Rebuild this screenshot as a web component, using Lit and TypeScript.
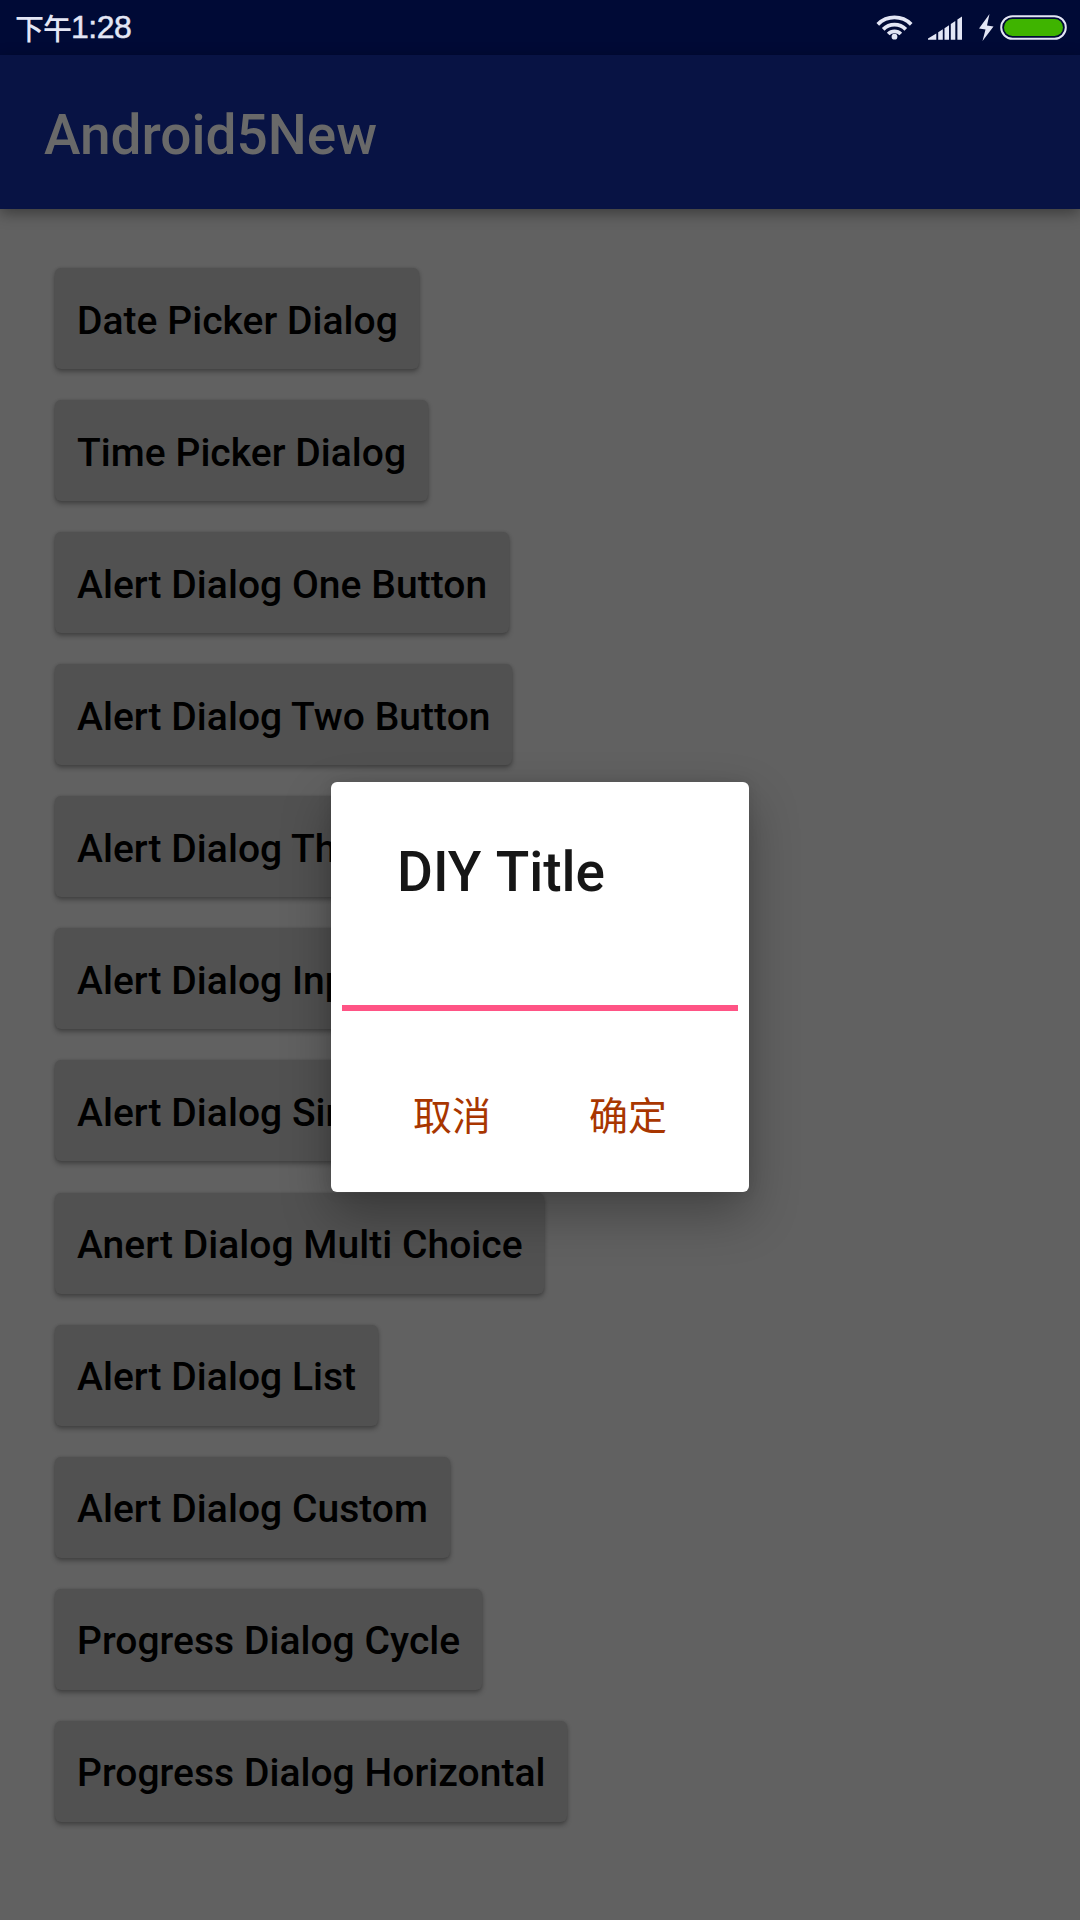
import { LitElement, html, css } from "lit";
import { customElement, property } from "lit/decorators.js";

@customElement("status-bar")
class StatusBar extends LitElement {
  static styles = css`
    :host { display: flex; height: 55px; box-sizing: border-box; align-items: center;
      justify-content: space-between; padding: 0 13px 0 15px; background: #000a36; color: #e3e6f5; }
    .clock { display: flex; align-items: center; height: 40px; padding-bottom: 1px; }
    .period { font: 500 29px/40px "Noto Sans CJK SC", sans-serif; letter-spacing: -1px; }
    .time { font: 400 32px/40px "Liberation Sans", sans-serif; letter-spacing: -0.5px; -webkit-text-stroke: 0.5px #e3e6f5; }
    svg { display: block; }
  `;
  render() {
    return html`
      <div class="clock"><span class="period">下午</span><span class="time">1:28</span></div>
      <svg width="191" height="55" viewBox="876 0 191 55" fill="#e3e6f5">
        <g fill="none" stroke="#e3e6f5" stroke-width="3.8">
          <path d="M877.800 24.300a23.800 23.800 0 0 1 33.400 0"/>
          <path d="M883.200 29.300a16 16 0 0 1 22.600 0"/>
          <path d="M888.200 34.000a9 9 0 0 1 12.600 0"/>
        </g>
        <circle cx="894.5" cy="36.700" r="2.900"/>
        <path d="M928 39.700V38.500L936.300 33.500V39.700ZM938.200 32.300L942.800 29.300V39.700H938.200ZM944.500 28.200L949 25.200V39.700H944.500ZM950.800 24L955.300 21V39.700H950.800ZM957.400 19.500L962 16.500V39.700H957.400Z"/>
        <path d="M989.500 14L979 28.500L985.500 29.500L982.500 41L993.500 26.500L987 25.500Z"/>
        <rect x="1001.200" y="16.200" width="64.600" height="22.600" rx="11.300" fill="#000a36" stroke="#e3e6f5" stroke-width="2"/>
        <rect x="1004" y="19" width="59" height="17" rx="8.500" fill="#3fb400"/>
      </svg>`;
  }
}

@customElement("demo-button")
class DemoButton extends LitElement {
  @property() label = "";
  static styles = css`
    :host { display: block; }
    .button { height: 101px; box-sizing: border-box; border: 0; border-radius: 6px; padding: 4px 21.5px 0 22px;
      display: flex; align-items: center; background: #515151; color: #000; white-space: nowrap;
      font: 500 39px/52px Roboto, sans-serif; letter-spacing: 0.04px;
      box-shadow: 0 3px 5px rgba(0,0,0,.3), 0 0 3px rgba(0,0,0,.15); }
  `;
  render() {
    return html`<button class="button">${this.label}</button>`;
  }
}

@customElement("edit-dialog")
class EditDialog extends LitElement {
  static styles = css`
    :host { display: flex; flex-direction: column; width: 418px; height: 410px; box-sizing: border-box;
      background: #fff; border-radius: 6px; box-shadow: 0 22px 50px rgba(0,0,0,.3), 0 0 14px rgba(0,0,0,.1); }
    .title { margin: 0; padding: 58px 0 0 66px; font: 500 55px/64px Roboto, sans-serif; word-spacing: 2px; color: #161616; }
    .field { margin: 101px 11px 0; height: 6px; background: #ff5485; }
    .actions { display: flex; margin-top: 74px; padding-left: 82px; gap: 98px; }
    .action { border: 0; padding: 0; background: none; color: #a83600;
      font: 400 39px/56px "Noto Sans CJK SC", sans-serif; }
  `;
  render() {
    return html`
      <h2 class="title">DIY Title</h2>
      <div class="field"></div>
      <div class="actions">
        <button class="action">取消</button>
        <button class="action">确定</button>
      </div>`;
  }
}

@customElement("app-root")
class AppRoot extends LitElement {
  static styles = css`
    :host { display: block; position: relative; width: 1080px; height: 1920px; overflow: hidden; background: #616161; }
    .bar { height: 154px; display: flex; align-items: center; padding: 6px 0 0 44px; box-sizing: border-box;
      background: #081344; box-shadow: 0 4px 14px rgba(0,0,0,.4); }
    .heading { margin: 0; font: 500 55px/64px Roboto, sans-serif; color: #696969; }
    .list { display: flex; flex-direction: column; align-items: flex-start; gap: 31.08px; padding: 59px 54px 0 55px; }
    .dialog { position: absolute; left: 331px; top: 782px; }
  `;
  private labels = [
    "Date Picker Dialog", "Time Picker Dialog", "Alert Dialog One Button", "Alert Dialog Two Button",
    "Alert Dialog Three Button", "Alert Dialog Input", "Alert Dialog Single Choice", "Anert Dialog Multi Choice",
    "Alert Dialog List", "Alert Dialog Custom", "Progress Dialog Cycle", "Progress Dialog Horizontal",
  ];
  render() {
    return html`
      <status-bar></status-bar>
      <header class="bar"><h1 class="heading">Android5New</h1></header>
      <main class="list">${this.labels.map((l) => html`<demo-button .label=${l}></demo-button>`)}</main>
      <edit-dialog class="dialog"></edit-dialog>`;
  }
}
